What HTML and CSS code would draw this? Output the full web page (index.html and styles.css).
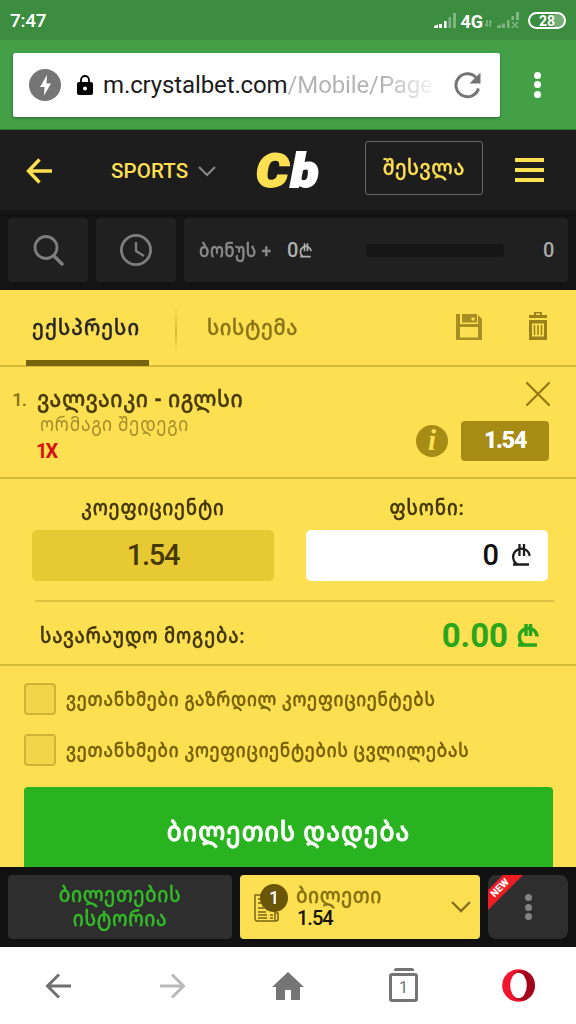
FILE: index.html
```html
<!DOCTYPE html>
<html lang="ka">
<head>
<meta charset="utf-8">
<title>Crystalbet</title>
<link rel="stylesheet" href="styles.css">
</head>
<body>
<div class="phone">
  <div class="status">
    <span class="clock">7:47</span>
    <div class="signals">
      <svg width="22" height="16" viewBox="0 0 22 16"><g fill="#fff"><path d="M0 16v-2l4-1.5V16zM5 12h3v4H5zM10 9h2.600v7H10z"/><path opacity=".35" d="M14.500 5h2.500v11h-2.500zM19 1h3v15h-3z"/></g></svg>
      <b class="net">4G</b>
      <svg class="updown" width="7" height="7" viewBox="0 0 7 7"><path d="M2 0v6M.5 4.500L2 6.500M5 7V1M6.500 2.500L5 .5" stroke="#a4cfa5" fill="none"/></svg>
      <svg class="nosim" width="22" height="16" viewBox="0 0 22 16"><path fill="#7fb681" d="M0 16v-2l4-1.500V16zM5 11.500h3V16H5zM10 8h2.600v8H10zM14.500 4h2.500v4h-2.500zM19 0h3v8h-3z"/><path d="M15 10l6 6M21 10l-6 6" stroke="#7fb681" stroke-width="1.600"/></svg>
      <span class="battery">28</span>
    </div>
  </div>
  <div class="browser">
    <div class="address">
      <svg width="32" height="32" viewBox="0 0 32 32"><circle cx="16" cy="16" r="16" fill="#757575"/><path fill="#fff" d="M18 6l-7 12h4.500l-.5 8.500 7-12h-4.500z"/></svg>
      <svg class="lock" width="16" height="20" viewBox="0 0 16 20"><path d="M4 8V5a4 4 0 0 1 8 0v3" fill="none" stroke="#000" stroke-width="1.800"/><rect y="7" width="16" height="13" rx="2"/><circle cx="8" cy="13.500" r="2" fill="#fff"/></svg>
      <div class="url">m.crystalbet.com<span class="path">/Mobile/Page</span></div>
      <svg class="reload" width="28" height="28" viewBox="0 0 28 28"><path d="M25.500 17.500A11.500 11.500 0 1 1 23 6.500" fill="none" stroke="#757575" stroke-width="3"/><path d="M27.500 1.500V12.500H16.500z" fill="#757575"/></svg>
    </div>
    <div class="dots"><i></i><i></i><i></i></div>
  </div>
  <header class="site">
    <svg class="back" width="26" height="26" viewBox="0 0 26 26"><path d="M13.500 1.500L2.500 13l11 11.500M2.500 13H26" fill="none" stroke="#fddf52" stroke-width="3.400"/></svg>
    <span class="sports">SPORTS</span>
    <svg class="chev" width="18" height="11" viewBox="0 0 18 11"><path d="M1 1l8 8 8-8" fill="none" stroke="#858585" stroke-width="2.200"/></svg>
    <div class="logo"><span>C</span>b</div>
    <div class="login"><span class="ka">შესვლა</span></div>
    <div class="burger"><i></i><i></i><i></i></div>
  </header>
  <div class="tools">
    <div class="tool"><svg width="32" height="34" viewBox="0 0 32 34"><circle cx="14" cy="14.500" r="11" fill="none" stroke="#7d7d7d" stroke-width="2.800"/><path d="M21.500 22.500l8.500 8.500" stroke="#7d7d7d" stroke-width="3.400" stroke-linecap="round"/></svg></div>
    <div class="tool"><svg width="32" height="32" viewBox="0 0 32 32"><circle cx="16" cy="16" r="14.600" fill="none" stroke="#7d7d7d" stroke-width="2.800"/><path d="M16 8v9l8 5" fill="none" stroke="#7d7d7d" stroke-width="2.400"/></svg></div>
    <div class="bonus"><span class="ka bonus-name">ბონუს +</span><span class="bonus-sum">0<svg class="gel" width="13" height="15" viewBox="0 0 20 22"><path d="M8.500 0v12M13 0v12M6 20A8.300 8.300 0 1 1 18.700 12M2 20.500h16" fill="none" stroke="currentColor" stroke-width="2.600"/></svg></span><i class="meter"></i><span class="points">0</span></div>
  </div>
  <main class="slip">
    <div class="tabs">
      <div class="tab active"><span class="ka">ექსპრესი</span></div>
      <i class="split"></i>
      <div class="tab system"><span class="ka">სისტემა</span></div>
      <svg class="save" width="26" height="26" viewBox="0 0 26 26"><path fill="#a88f24" fill-rule="evenodd" d="M0 0h4v10h18V1l4 4v21H0zM4 13v10.500h18V13z"/><path fill="#a88f24" fill-rule="evenodd" d="M6 0h15v8.500H6zM15.500 3.500v3h3v-3z"/></svg>
      <svg class="trash" width="18" height="28" viewBox="0 0 18 28"><path fill="#9b8119" fill-rule="evenodd" d="M5 3V0h8v3h5v3H0V3zM7 1.500V3h4V1.500zM0 8h18v20H0zM3 11.500v13h12v-13z"/><path d="M5.500 13v10M9 13v10M12.500 13v10" stroke="#9b8119" stroke-width="1.500"/></svg>
    </div>
    <section class="pick">
      <span class="num">1.</span>
      <div class="match">
        <div class="ka teams">ვალვაიკი - იგლსი</div>
        <div class="ka market">ორმაგი შედეგი</div>
        <div class="outcome">1X</div>
      </div>
      <div class="side">
        <svg class="close" width="26" height="26" viewBox="0 0 26 26"><path d="M2 2l22 22M24 2L2 24" stroke="#927812" stroke-width="2.200" stroke-linecap="round"/></svg>
        <div class="odds"><span class="info">i</span><span class="odd">1.54</span></div>
      </div>
    </section>
    <section class="stake">
      <div class="fields">
        <div class="field"><span class="ka lab-k">კოეფიციენტი</span><div class="box coef">1.54</div></div>
        <div class="field"><span class="ka lab-p">ფსონი:</span><div class="box input">0<svg width="20" height="22" viewBox="0 0 20 22"><path d="M8.500 0v12M13 0v12M6 20A8.300 8.300 0 1 1 18.700 12M2 20.500h16" fill="none" stroke="#1c1c1c" stroke-width="2.300"/></svg></div></div>
      </div>
      <div class="win"><span class="ka">სავარაუდო მოგება:</span><div class="sum">0.00<svg width="22" height="23" viewBox="0 0 22 23"><path d="M9 0v12M13.500 0v12M6.500 20.500A8.800 8.800 0 1 1 20 12.500M1 21h19" fill="none" stroke="#29a61c" stroke-width="3.500"/></svg></div></div>
    </section>
    <section class="agree">
      <div class="check"><i></i><span class="ka c1">ვეთანხმები გაზრდილ კოეფიციენტებს</span></div>
      <div class="check"><i></i><span class="ka c2">ვეთანხმები კოეფიციენტების ცვლილებას</span></div>
      <div class="place"><span class="ka">ბილეთის დადება</span></div>
    </section>
  </main>
  <div class="dock">
    <div class="history"><span class="ka h1">ბილეთების</span><span class="ka h2">ისტორია</span></div>
    <div class="ticket">
      <div class="paper"><svg width="26" height="30" viewBox="0 0 26 30"><path d="M1 2h20v26H3q-2 0-2-3zM21 20h3v7q-1 1-3 1M4 6h8M4 10h14M4 15h6M4 19h8M4 22h9M16 22h3M4 25h9M16 25h3" fill="none" stroke="#7a6615" stroke-width="1.500"/></svg><span class="count">1</span></div>
      <div class="ticket-text"><span class="ka">ბილეთი</span><b>1.54</b></div>
      <svg class="down" width="20" height="12" viewBox="0 0 20 12"><path d="M1 1l9 9 9-9" fill="none" stroke="#85701f" stroke-width="2.400"/></svg>
    </div>
    <div class="more"><i class="ribbon"></i><span class="new">NEW</span><div class="dots grey"><i></i><i></i><i></i></div></div>
  </div>
  <nav class="nav">
    <svg width="26" height="26" viewBox="0 0 26 26"><path d="M14 1.500L2.500 13 14 24.500M2.500 13H26" fill="none" stroke="#707070" stroke-width="3"/></svg>
    <svg class="forward" width="26" height="26" viewBox="0 0 26 26"><path d="M12 1.500L23.500 13 12 24.500M23.500 13H0" fill="none" stroke="#b9b9b9" stroke-width="3"/></svg>
    <svg class="home" width="32" height="28" viewBox="0 0 32 28"><path d="M16 0l16 15h-4v13h-9V18h-6v10H4V15H0z" fill="#757575"/></svg>
    <div class="pages"><i></i><span>1</span></div>
    <svg class="opera" width="33" height="33" viewBox="0 0 33 33"><circle cx="16.500" cy="16.500" r="16.300" fill="#f3142f"/><path d="M11 5.500Q17 0 24 2A16.300 16.300 0 0 1 24 31Q17 33 11 27.500z" fill="#a5001b"/><ellipse cx="16.500" cy="16.500" rx="8.300" ry="12.700" fill="#fff"/></svg>
  </nav>
</div>
</body>
</html>
```
FILE: styles.css
```css
* { box-sizing: border-box; }
body { margin: 0; background: #fff; }
i { font-style: normal; }
svg { display: block; flex: none; }
.phone { width: 576px; height: 1024px; overflow: hidden; display: flex; flex-direction: column; font-family: Roboto, "DejaVu Sans", sans-serif; font-weight: 500; }
.ka { font-family: Roboto, "Noto Sans Georgian", "DejaVu Sans", sans-serif; white-space: nowrap; line-height: 24px; display: block; transform: scaleY(1.12); -webkit-text-stroke: .35px currentColor; }
.status { height: 40px; background: #3c8d40; color: #fff; display: flex; justify-content: space-between; padding: 0 10px; align-items: center; flex: none; }
.clock { font-size: 19px; letter-spacing: -.3px; }
.signals { display: flex; align-items: center; }
.net { font-size: 18px; margin: 2px -1px 0 4px; font-weight: 700; }
.updown { margin: 6px 5px 0 3px; }
.battery { width: 38px; height: 17px; border: 2px solid #fff; border-radius: 9px; margin-left: 9px; font-size: 14px; line-height: 14px; text-align: center; font-weight: 700; background: linear-gradient(90deg, #3c8d40 24px, #74ae76 24px); background-clip: content-box; }
.browser { height: 90px; background: #43a047; border-bottom: 1px solid #2d7a32; display: flex; align-items: center; flex: none; padding-left: 13px; }
.address { width: 487px; height: 64px; background: #fff; border-radius: 2px; box-shadow: 0 1px 3px rgba(0,0,0,.35); display: flex; align-items: center; padding-left: 16px; }
.lock { margin-left: 16px; }
.url { font-size: 24px; font-weight: 400; color: #1c1c1c; margin-left: 10px; width: 332px; white-space: nowrap; overflow: hidden; letter-spacing: -.12px; }
.path { color: transparent; background: linear-gradient(90deg, #b2b2b2 65%, #fff 106%); background-clip: text; }
.reload { margin-left: 18px; }
.dots { display: flex; flex-direction: column; gap: 2.5px; margin-left: 34px; }
.dots i { width: 7px; height: 7px; border-radius: 50%; background: #fff; }
.site { height: 80px; background: #1d1d1d; display: flex; align-items: center; flex: none; padding: 2px 0 0 26px; }
.sports { color: #fddf52; font-size: 20.5px; margin-left: 59px; width: 78px; letter-spacing: .1px; }
.chev { margin-left: 9px; }
.logo { font: italic 900 46px/50px Roboto, sans-serif; color: #fff; margin: -1px 0 0 40px; width: 67px; letter-spacing: 2px; white-space: nowrap; -webkit-text-stroke: 2px currentColor; transform: scaleX(1.11); transform-origin: left; }
.logo span { color: #fddf52; }
.login { width: 118px; height: 54px; border: 1px solid #656565; border-radius: 3px; margin-left: 42px; margin-top: -6px; color: #fddf52; display: flex; justify-content: center; align-items: center; font-size: 19.5px; letter-spacing: .7px; }
.burger { display: flex; flex-direction: column; gap: 6.5px; margin: -2px 0 0 32px; }
.burger i { width: 29px; height: 3.500px; background: #fddf52; }
.tools { height: 80px; flex: none; background: #141414; display: flex; gap: 8px; padding: 8px; }
.tool { width: 80px; height: 64px; background: #202020; border-radius: 4px; display: flex; align-items: center; justify-content: center; }
.bonus { flex: 1; height: 64px; background: #202020; border-radius: 4px; display: flex; align-items: center; padding-left: 15px; color: #8a8a8a; font-size: 17px; }
.bonus-name { width: 74px; letter-spacing: .5px; }
.bonus-sum { margin-left: 14px; font-size: 20px; color: #b0b0b0; display: flex; align-items: center; gap: 1px; width: 79px; }
.meter { width: 138px; height: 13px; border-radius: 4px; background: #161616; }
.points { margin-left: 39px; font-size: 20px; color: #aaa; }
.slip { height: 577px; flex: none; background: #fddf52; overflow: hidden; }
.tabs { height: 77px; border-bottom: 2px solid #d6bb3a; display: flex; padding-left: 26px; }
.tab { height: 76px; font-size: 20px; padding-top: 25px; color: #8a7419; letter-spacing: .6px; }
.active { width: 123px; padding-left: 6px; border-bottom: 6px solid #78640d; color: #252525; letter-spacing: 1.1px; }
.split { width: 2px; height: 46px; margin: 18px 0 0 26px; background: linear-gradient(transparent, #dcb92a, transparent); }
.system { margin-left: 30px; width: 249px; }
.save { margin-top: 24px; }
.trash { margin: 22px 0 0 47px; }
.pick { height: 112px; border-bottom: 2px solid #d6bb3a; display: flex; padding: 20px 27px 0 12px; }
.num { font-size: 19px; line-height: 26px; color: #8a7413; width: 25px; letter-spacing: -1px; }
.match { flex: 1; }
.teams { font-size: 21px; color: #463900; letter-spacing: .6px; }
.market { font-size: 17.5px; color: #a48c2c; padding-left: 3px; margin-top: 1px; font-weight: 400; letter-spacing: .8px; -webkit-text-stroke: 0; }
.outcome { font-size: 20px; line-height: 24px; font-weight: 700; color: #d41414; margin-top: 3px; letter-spacing: -2px; margin-left: -1px; }
.side { display: flex; flex-direction: column; align-items: flex-end; margin-top: -6px; }
.close { margin-right: -2px; }
.odds { display: flex; align-items: center; gap: 13px; margin-top: 14px; }
.info { width: 32px; height: 32px; border-radius: 50%; background: #a68c14; color: #fddf52; font: italic 700 29px/31px "Liberation Serif", serif; text-align: center; }
.odd { width: 88px; height: 40px; border-radius: 4px; background: #a68c14; color: #fff; font-size: 23px; font-weight: 900; line-height: 39px; text-align: center; letter-spacing: -1.2px; }
.stake { height: 187px; border-bottom: 2px solid #d6bb3a; }
.fields { display: flex; gap: 32px; padding: 17px 0 0 32px; }
.field { width: 242px; display: flex; flex-direction: column; align-items: center; font-size: 18.5px; color: #3f3400; letter-spacing: .9px; }
.box { width: 242px; height: 51px; border-radius: 5px; margin-top: 10px; font-size: 29px; line-height: 51px; letter-spacing: 0; }
.coef { background: #e6c933; text-align: center; color: #463900; letter-spacing: -1.3px; }
.input { background: #fff; color: #111; display: flex; justify-content: flex-end; align-items: center; gap: 12px; padding-right: 17px; }
.input svg { margin-top: -1px; }
.win { margin: 19px 22px 0 35px; border-top: 2px solid #dfc142; height: 65px; display: flex; justify-content: space-between; align-items: center; padding: 4px 15px 0 5px; font-size: 18.5px; letter-spacing: .9px; color: #3f3400; }
.sum { display: flex; align-items: center; gap: 9px; font-size: 33px; font-weight: 700; color: #29a61c; letter-spacing: 0; }
.agree { padding: 17px 23px 0 24px; }
.check { display: flex; height: 32px; align-items: center; margin-bottom: 19px; color: #755f00; font-size: 17px; gap: 10px; }
.check i { width: 32px; height: 32px; border: 2px solid #ceb335; border-radius: 4px; background: #f2d549; flex: none; }
.c1, .c2 { letter-spacing: .75px; }
.place { height: 90px; background: #2ab320; border-radius: 4px 4px 0 0; color: #fff; font-size: 24.5px; letter-spacing: 1.1px; text-align: center; padding-top: 33px; margin-top: 21px; }
.place .ka { -webkit-text-stroke: .8px currentColor; }
.dock { height: 80px; flex: none; background: #111; display: flex; gap: 8px; padding: 8px; }
.history { width: 224px; background: #2e2e2e; border-radius: 4px; color: #33bb28; font-size: 19px; letter-spacing: .6px; display: flex; flex-direction: column; align-items: center; padding-top: 8px; }
.ticket { width: 240px; background: #fddf52; border-radius: 4px; display: flex; align-items: center; padding-left: 14px; }
.paper { position: relative; width: 34px; padding-top: 1px; }
.count { position: absolute; left: 6px; top: -8px; width: 28px; height: 28px; border-radius: 50%; background: #6a5607; color: #fff; font-size: 18px; line-height: 27px; text-align: center; }
.ticket-text { margin-left: 8px; width: 155px; font-size: 19px; color: #85700f; letter-spacing: .5px; margin-top: -2px; }
.ticket-text b { display: block; font-size: 20px; line-height: 20px; font-weight: 500; color: #171400; letter-spacing: -1px; padding-left: 1px; }
.down { margin-top: -1px; }
.more { width: 80px; background: #2e2e2e; border-radius: 8px; position: relative; overflow: hidden; display: flex; align-items: center; }
.ribbon { position: absolute; left: 0; top: 0; width: 35px; height: 35px; background: #ee1c23; clip-path: polygon(15px 0, 35px 0, 0 35px, 0 15px); }
.new { position: absolute; left: 0; top: 6px; width: 24px; height: 14px; color: #fff; font-size: 10px; font-weight: 900; line-height: 14px; text-align: center; transform: rotate(-45deg); }
.grey { margin-left: 37px; }
.dots.grey i { background: #828282; }
.nav { height: 77px; flex: none; background: #fff; display: flex; align-items: center; padding-left: 45px; }
.forward { margin-left: 89px; }
.home { margin-left: 86px; }
.pages { width: 29px; height: 35px; display: flex; flex-direction: column; align-items: center; font-size: 17px; font-weight: 400; color: #757575; margin-left: 85px; }
.opera { margin-left: 84px; }
.pages i { width: 20px; height: 3px; border-radius: 2px 2px 0 0; background: #757575; margin-bottom: 2px; flex: none; }
.pages span { width: 29px; height: 29px; border: 3px solid #757575; border-radius: 3px; line-height: 23px; text-align: center; }
```
